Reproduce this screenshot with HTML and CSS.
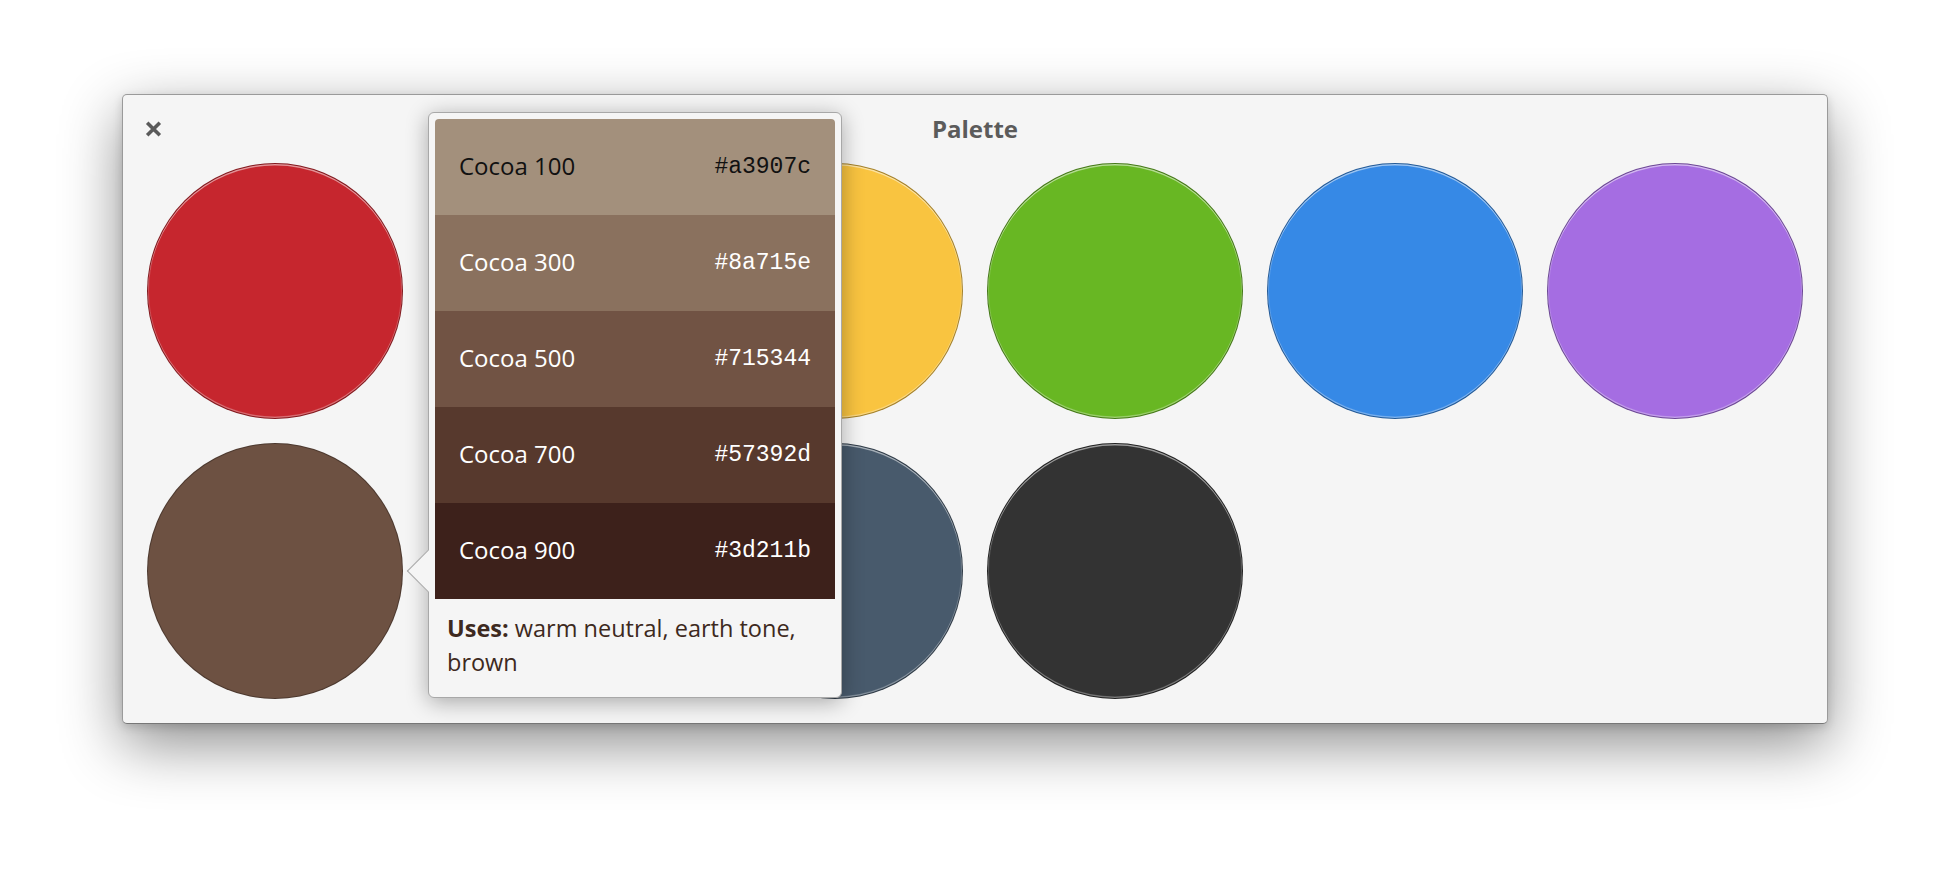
FILE: index.html
```html
<!DOCTYPE html>
<html lang="en">
<head>
<meta charset="utf-8">
<title>Palette</title>
<link rel="stylesheet" href="styles.css">
</head>
<body>
<div class="window">
  <header class="titlebar">
    <button class="close" aria-label="Close">
      <svg width="17" height="16" viewBox="0 0 17 16"><path d="M2.2 1.8 L14.8 14.2 M14.8 1.8 L2.2 14.2" stroke="#5a5a5a" stroke-width="3.6" fill="none"/></svg>
    </button>
    <h1 class="title">Palette</h1>
    <span></span>
  </header>
  <div class="grid">
    <div class="dot strawberry"></div>
    <div class="dot orange covered"></div>
    <div class="dot banana"></div>
    <div class="dot lime"></div>
    <div class="dot blueberry"></div>
    <div class="dot grape"></div>
    <div class="dot cocoa active"></div>
    <div class="dot silver covered"></div>
    <div class="dot slate"></div>
    <div class="dot black"></div>
  </div>
  <div class="popover">
    <div class="arrow"></div>
    <div class="popover-body">
      <div class="swatches">
        <div class="swatch s100"><span class="name">Cocoa 100</span><span class="hex">#a3907c</span></div>
        <div class="swatch s300"><span class="name">Cocoa 300</span><span class="hex">#8a715e</span></div>
        <div class="swatch s500"><span class="name">Cocoa 500</span><span class="hex">#715344</span></div>
        <div class="swatch s700"><span class="name">Cocoa 700</span><span class="hex">#57392d</span></div>
        <div class="swatch s900"><span class="name">Cocoa 900</span><span class="hex">#3d211b</span></div>
      </div>
      <p class="uses"><b>Uses:</b> <span>warm neutral, earth tone, brown</span></p>
    </div>
  </div>
</div>
</body>
</html>
```
FILE: styles.css
```css
html, body {
  margin: 0;
  padding: 0;
  background: #ffffff;
}
body {
  display: flex;
  justify-content: center;
  padding-top: 94px;
  height: 874px;
  box-sizing: border-box;
  overflow: hidden;
  font-family: "Open Sans", "Noto Sans", sans-serif;
}
.window {
  position: relative;
  width: 1706px;
  box-sizing: border-box;
  background: #f5f5f5;
  border: 1px solid #9a9a9a;
  border-bottom-color: #777777;
  border-radius: 5px;
  box-shadow: 0 20px 60px rgba(0, 0, 0, 0.45), 0 3px 10px rgba(0, 0, 0, 0.15);
  align-self: flex-start;
}
.titlebar {
  height: 68px;
  display: grid;
  grid-template-columns: 1fr auto 1fr;
  align-items: center;
  padding: 0 22px;
}
.close {
  justify-self: start;
  width: 17px;
  height: 16px;
  padding: 0;
  margin-top: -1px;
  border: 0;
  background: transparent;
  display: flex;
}
.title {
  margin: 0;
  font-size: 24px;
  font-weight: 700;
  color: #5b5b5b;
  padding-bottom: 2px;
}
.grid {
  display: grid;
  grid-template-columns: repeat(6, 256px);
  grid-auto-rows: 256px;
  gap: 24px;
  padding: 0 24px 24px;
}
.dot {
  box-sizing: border-box;
  border-radius: 50%;
  border: 1px solid rgba(0, 0, 0, 0.34);
  box-shadow: inset 0 1.5px 0 rgba(255, 255, 255, 0.45), inset 0 -1.5px 0 rgba(255, 255, 255, 0.25), inset 0 0 0 1px rgba(255, 255, 255, 0.14);
}
.dot.covered {
  visibility: hidden;
}
.strawberry { background: #c6262e; }
.orange { background: #f37329; }
.banana { background: #f9c440; }
.lime { background: #68b723; }
.blueberry { background: #3689e6; }
.grape { background: #a56de2; }
.cocoa { background: #6d5142; }
.silver { background: #abacae; }
.slate { background: #485a6c; }
.black { background: #333333; }
.dot.active {
  border-color: rgba(0, 0, 0, 0.3);
  box-shadow: none;
}
.popover {
  position: absolute;
  left: 305px;
  top: 17px;
  width: 414px;
  box-sizing: border-box;
  background: #f5f5f5;
  border: 1px solid #a8a8a8;
  border-radius: 6px;
  padding: 6px;
  box-shadow: 0 4px 22px rgba(0, 0, 0, 0.32);
}
.arrow {
  position: absolute;
  left: -16.5px;
  top: 443px;
  width: 30px;
  height: 30px;
  box-sizing: border-box;
  background: #f5f5f5;
  border-left: 1px solid #a8a8a8;
  border-bottom: 1px solid #a8a8a8;
  transform: rotate(45deg);
}
.popover-body {
  position: relative;
}
.swatches {
  border-radius: 4px 4px 0 0;
  overflow: hidden;
}
.swatch {
  height: 96px;
  display: flex;
  align-items: center;
  justify-content: space-between;
  padding: 0 24px;
  color: #ffffff;
}
.name {
  font-size: 24px;
  padding-bottom: 4px;
}
.hex {
  font-family: "Liberation Mono", monospace;
  font-size: 23px;
}
.s100 { background: #a3907c; color: #111111; }
.s300 { background: #8a715e; }
.s500 { background: #715344; }
.s700 { background: #57392d; }
.s900 { background: #3d211b; }
.uses {
  margin: 0;
  padding: 12px;
  font-size: 23.5px;
  line-height: 34px;
  color: #3d2920;
}
.uses b {
  font-weight: 700;
}
```
